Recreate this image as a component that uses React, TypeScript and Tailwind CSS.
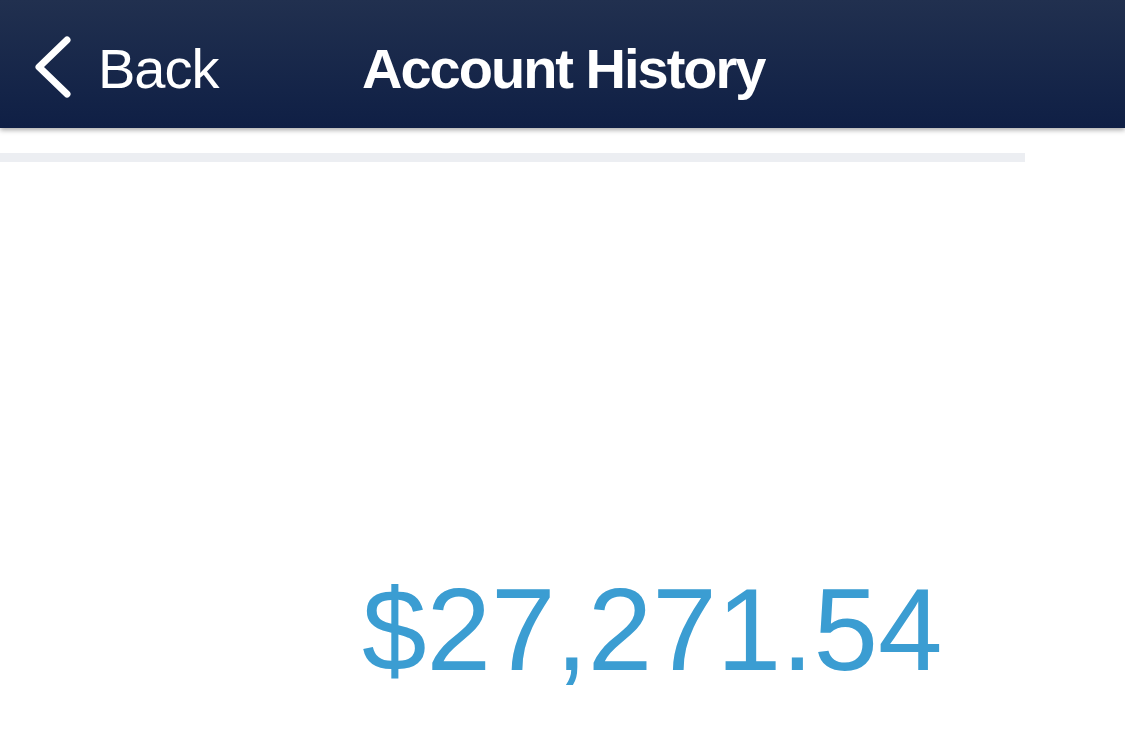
export default function App() {
  return (
    <div className="w-[1125px] h-[733px] overflow-hidden bg-white font-['Liberation_Sans',Arial,sans-serif]">
      <header className="relative z-10 h-[128px] flex items-center bg-gradient-to-b from-[#21304f] to-[#0f1f45] shadow-[0_2px_5px_rgba(0,0,0,0.35)]">
        <div className="flex items-center pl-[34px] w-[362px]">
          <svg width="38" height="64" viewBox="0 0 38 64" className="shrink-0 mt-[6px]">
            <path d="M33 5 L5 32 L33 59" fill="none" stroke="white" strokeWidth="7" strokeLinecap="round" strokeLinejoin="round" />
          </svg>
          <span className="ml-[26px] pt-[9px] text-white text-[56px] leading-none tracking-[-1px]">Back</span>
        </div>
        <h1 className="pt-[9px] text-white text-[56px] leading-none font-bold tracking-[-2px]">Account History</h1>
      </header>
      <div className="mt-[25px] h-[9px] w-[1025px] bg-[#eceef2]" />
      <div className="mt-[410px] pl-[362px] text-[116px] leading-none text-[#3b9dd2]">$27,271.54</div>
    </div>
  );
}
